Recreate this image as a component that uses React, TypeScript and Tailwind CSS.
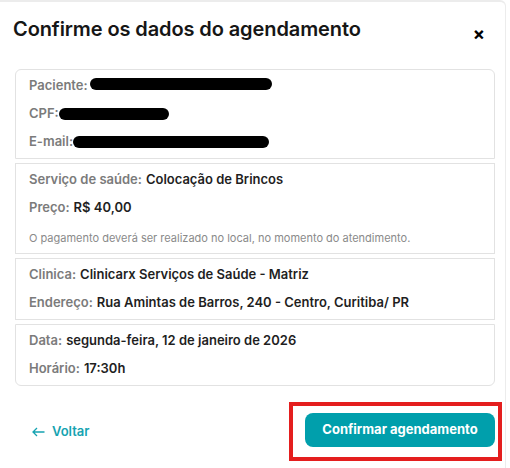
import { ReactNode } from 'react'

function Row({ label, children }: { label: string; children?: ReactNode }) {
  return (
    <div className="h-[28px] flex items-center text-[13px] font-semibold">
      <span className="text-[#7b7b7b]">{label}</span>
      {children}
    </div>
  )
}

function Redacted({ width }: { width: number }) {
  return <span className="inline-block h-[12px] bg-black rounded-full" style={{ width }} />
}

export default function App() {
  return (
    <div className="w-[510px] h-[468px] bg-white font-['Inter',sans-serif] overflow-hidden">
      <div className="w-[506px] h-full border-t-2 border-r border-[#ececec] rounded-tr-[6px] relative">
        <div className="flex justify-between pl-[13px] pr-[20px] pt-[13px]">
          <h1 className="text-[20px] font-semibold text-[#161616] leading-[28px] tracking-[-0.1px]">
            Confirme os dados do agendamento
          </h1>
          <button className="mt-[10px] text-[18px] font-bold leading-none text-black">×</button>
        </div>

        <div className="mx-[15px] mt-[26px] w-[480px] flex flex-col gap-[4px] text-[#1f1f1f]">
          <div className="border border-[#e2e2e2] rounded-t-[6px] px-[13px] py-[2px]">
            <Row label="Paciente:">
              <span className="ml-[2px]"><Redacted width={182} /></span>
            </Row>
            <Row label="CPF:">
              <Redacted width={110} />
            </Row>
            <Row label="E-mail:">
              <Redacted width={196} />
            </Row>
          </div>

          <div className="border border-[#e2e2e2] px-[13px] py-[2px]">
            <Row label="Serviço de saúde:">
              <span className="ml-[4px]">Colocação de Brincos</span>
            </Row>
            <Row label="Preço:">
              <span className="ml-[4px]">R$ 40,00</span>
            </Row>
            <div className="h-[29px] flex items-center pt-[3px] text-[11px] text-[#8a8a8a]">
              O pagamento deverá ser realizado no local, no momento do atendimento.
            </div>
          </div>

          <div className="border border-[#e2e2e2] px-[13px] py-[2px]">
            <Row label="Clinica:">
              <span className="ml-[4px]">Clinicarx Serviços de Saúde - Matriz</span>
            </Row>
            <Row label="Endereço:">
              <span className="ml-[4px]">Rua Amintas de Barros, 240 - Centro, Curitiba/ PR</span>
            </Row>
          </div>

          <div className="border border-[#e2e2e2] rounded-b-[6px] px-[13px] py-[2px]">
            <Row label="Data:">
              <span className="ml-[4px]">segunda-feira, 12 de janeiro de 2026</span>
            </Row>
            <Row label="Horário:">
              <span className="ml-[4px]">17:30h</span>
            </Row>
          </div>
        </div>

        <div className="flex items-center justify-between mt-[16px] pl-[32px] pr-[3px]">
          <button className="flex items-center gap-[7px] text-[13px] font-semibold text-[#16a3b1]">
            <svg width="13" height="10" viewBox="0 0 13 10" fill="none" stroke="currentColor" strokeWidth="1.3">
              <path d="M12.5 5H1M5 1L1 5l4 4" />
            </svg>
            Voltar
          </button>
          <div className="border-4 border-[#e41e1e] pl-[12px] pr-[3px] pt-[7px] pb-[10px]">
            <button className="w-[190px] h-[34px] rounded-[8px] bg-[#009fac] text-white text-[13px] font-bold">
              Confirmar agendamento
            </button>
          </div>
        </div>
      </div>
    </div>
  )
}
